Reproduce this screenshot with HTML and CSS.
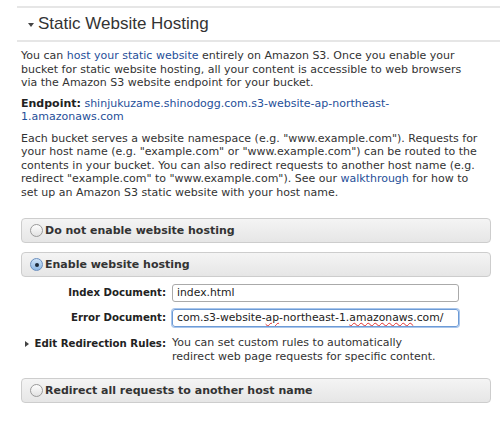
FILE: index.html
```html
<!DOCTYPE html>
<html>
	<head>
		<meta charset="UTF-8">
		<title>Static Website Hosting</title>
		<link rel="stylesheet" href="styles.css">
	</head>
	<body>
		<div class="panel">
			<div class="panel-title">
				<span class="arrow-down"></span>
				<span>Static Website Hosting</span>
			</div>
			<div class="panel-body">
				<p class="intro">You can <a href="#">host your static website</a> entirely on Amazon S3. Once you enable your<br>bucket for static website hosting, all your content is accessible to web browsers<br>via the Amazon S3 website endpoint for your bucket.</p>
				<p class="endpoint"><strong>Endpoint:</strong> <a href="#">shinjukuzame.shinodogg.com.s3-website-ap-northeast-<br>1.amazonaws.com</a></p>
				<p class="note">Each bucket serves a website namespace (e.g. "www.example.com"). Requests for<br>your host name (e.g. "example.com" or "www.example.com") can be routed to the<br>contents in your bucket. You can also redirect requests to another host name (e.g.<br>redirect "example.com" to "www.example.com"). See our <a href="#">walkthrough</a> for how to<br>set up an Amazon S3 static website with your host name.</p>

				<div class="option">
					<span class="radio"></span>
					<span>Do not enable website hosting</span>
				</div>
				<div class="option">
					<span class="radio checked"></span>
					<span>Enable website hosting</span>
				</div>
				<div class="form">
					<label class="flabel">Index Document:</label>
					<div class="itext">index.html</div>
					<label class="flabel">Error Document:</label>
					<div class="itext focus">com.s3-website-<span class="typo">ap</span>-northeast-1.<span class="typo">amazonaws</span>.com/</div>
					<label class="flabel rules"><span class="arrow-right"></span>Edit Redirection Rules:</label>
					<div class="help">You can set custom rules to automatically<br>redirect web page requests for specific content.</div>
				</div>
				<div class="option last">
					<span class="radio"></span>
					<span>Redirect all requests to another host name</span>
				</div>
			</div>
		</div>
	</body>
</html>
```
FILE: styles.css
```css
*{
	margin: 0;
	padding: 0;
}
body{
	background: #fff;
	color: #333;
	font-family: "DejaVu Sans", Verdana, sans-serif;
}
a{
	color: #1f4f99;
	text-decoration: none;
}
.panel{
	margin: 6px 0 0 17px;
	border-top: 2px solid #e6e6e6;
}
.panel-title{
	height: 32px;
	display: flex;
	align-items: center;
	padding-left: 11px;
	border-bottom: 2px solid #e6e6e6;
	font-family: "Liberation Sans", Arial, sans-serif;
	font-size: 17px;
	color: #333;
}
.arrow-down{
	width: 0;
	height: 0;
	border-left: 3px solid transparent;
	border-right: 3px solid transparent;
	border-top: 4px solid #444;
	margin-right: 4px;
	margin-top: 2px;
}
.panel-body{
	padding: 7px 9px 0 4px;
	font-size: 11px;
	line-height: 13.5px;
}
.endpoint{
	margin-top: 7px;
}
.endpoint strong{
	color: #222;
}
.note{
	margin-top: 8px;
}
.option{
	height: 23px;
	margin-top: 19px;
	display: flex;
	align-items: center;
	padding-left: 8px;
	border: 1px solid #cdcdcd;
	border-radius: 4px;
	background: linear-gradient(#f4f4f4, #e6e6e6);
	font-size: 11px;
	font-weight: bold;
	color: #333;
}
.option + .option{
	margin-top: 9px;
}
.option.last{
	margin-top: 14px;
}
.radio{
	width: 11px;
	height: 11px;
	border: 1px solid #9a9a9a;
	border-radius: 50%;
	background: linear-gradient(#fdfdfd, #e2e2e2);
	margin-right: 2px;
	display: flex;
	align-items: center;
	justify-content: center;
}
.radio.checked{
	border-color: #6a8fbf;
	background: linear-gradient(#cfe3f8, #8db8e6);
}
.radio.checked::after{
	content: "";
	width: 4px;
	height: 4px;
	border-radius: 50%;
	background: #1c2a3a;
}
.form{
	display: grid;
	grid-template-columns: 145px 287px;
	column-gap: 6px;
	row-gap: 7px;
	margin-top: 7px;
	align-items: center;
}
.flabel{
	font-size: 10.2px;
	font-weight: bold;
	color: #222;
	white-space: nowrap;
	display: flex;
	justify-content: flex-end;
	align-items: center;
}
.itext{
	height: 16px;
	border: 1px solid #aaa;
	border-radius: 3px;
	padding-left: 4px;
	font-size: 10.8px;
	line-height: 16px;
	white-space: nowrap;
	overflow: hidden;
	color: #222;
}
.itext.focus{
	border-color: #6d9bd6;
	box-shadow: 0 0 0 1px #a9c6ec;
}
.typo{
	text-decoration: underline wavy #e03030;
	text-decoration-thickness: 1px;
	text-underline-offset: 1px;
}
.flabel.rules{
	align-self: start;
	margin-top: 3px;
	gap: 6px;
}
.arrow-right{
	width: 0;
	height: 0;
	border-top: 3px solid transparent;
	border-bottom: 3px solid transparent;
	border-left: 4px solid #444;
}
.help{
	margin-top: 2px;
	color: #333;
	line-height: 14px;
}
```
